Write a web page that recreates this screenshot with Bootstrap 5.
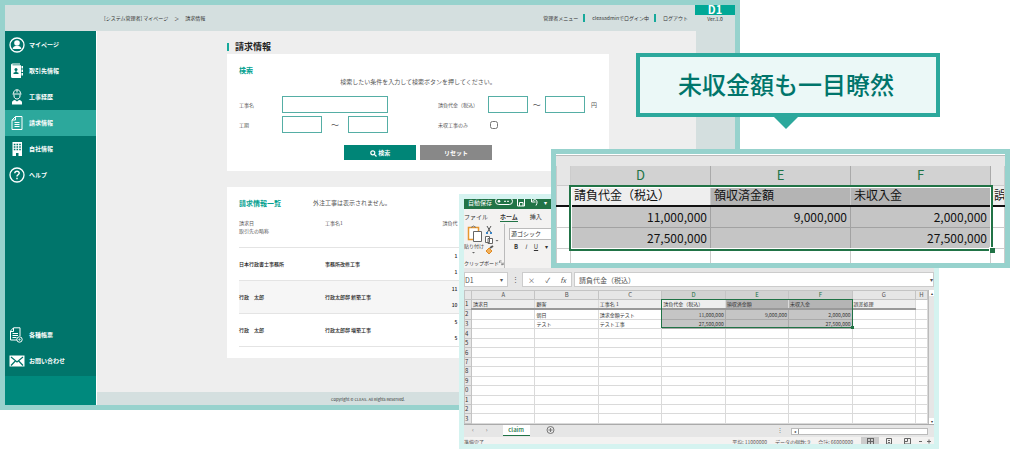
<!DOCTYPE html>
<html lang="ja">
<head>
<meta charset="utf-8">
<meta name="viewport" content="width=device-width, initial-scale=1">
<title>請求情報</title>
<link href="https://cdn.jsdelivr.net/npm/bootstrap@5.3.0/dist/css/bootstrap.min.css" rel="stylesheet">
<style>
:root{--jp:"Noto Sans CJK JP","Noto Sans",sans-serif;--mint:#97d2cd;--deep:#00756b;--teal:#2ca89c;--haze:#d4dfdf}
body{font-family:var(--jp);font-size:5px;line-height:8px;color:#333;background:#fff}
.stage{min-height:450px}
/* application window */
.app-window{margin-right:270px;border:5px solid var(--mint);min-height:410px;background:#eee}
.top-bar{height:26px;background:var(--haze);padding-left:99px}
.top-bar a{color:#333;text-decoration:none}
.top-bar .links{padding-right:2px}
.top-bar .links a{padding:0 5px 0 7px;border-left:2px solid #16a99b}
.top-bar .links a:first-child{border:0}
.crumbs{display:flex;gap:6px}
.version{width:40px;font-size:5px}
.version b{display:block;height:10px;background:#00a896;color:#fff;font-size:11px;line-height:8px;overflow:hidden}
.side-menu{width:92px;background:var(--deep);border-right:1px solid #fff;padding-top:1px}
.side-menu a{height:26px;gap:4px;padding-left:4px;color:#fff;font-size:6px;font-weight:700;text-decoration:none}
.side-menu a.current{background:var(--teal)}
.side-menu svg{width:16px;height:16px;flex:none}
.side-foot{height:29px;margin-top:2px;background:#00897d}
.right-rail{width:39px;background:var(--haze)}
.page-area{min-width:0;padding:8px 87px 0 130px}
.page-title{font-size:9px;line-height:15px;font-weight:700;margin:0;color:#222}
.page-title::before{content:"";width:2px;height:8px;background:#16a99b;margin-right:6px}
.panel{background:#fff;padding:10px 12px 11px}
.panel h2{font-size:7px;line-height:12px;font-weight:700;color:#00a08f;margin:0}
.note{font-size:6px;line-height:12px;color:#555;margin:0}
.search-grid{display:grid;grid-template-columns:199px minmax(0,1fr);row-gap:3px;margin-top:8px;color:#555}
.search-grid>div{height:17px;white-space:nowrap}
.search-grid label{width:43px}
.search-grid label.wide{width:51px}
.search-grid input[type=text]{height:17px;width:40px;min-width:0;flex:none;border:1px solid #55aea5;border-radius:0;padding:0 2px;font-size:6px;background:#fff}
.search-grid input.full{width:106px}
.search-grid input[type=checkbox]{width:8px;height:8px;margin:0 0 0 1px}
.search-grid .tilde{width:26px;text-align:center;font-size:8px}
.search-grid .tilde.slim{width:17px}
.search-grid .yen{font-size:6px;padding-left:6px}
.act{width:72px;height:15px;border:0;border-radius:0;color:#fff;font-size:6px;line-height:15px;font-weight:700;padding:0;background:#008577}
.act.grey{background:#888}
.claims{width:100%;table-layout:fixed;margin-top:10px}
.claims th{font-weight:400;color:#555;padding:0 0 12px;vertical-align:top;white-space:nowrap}
.claims td{height:33px;padding:0;font-weight:500;color:#222}
.claims tr{border-bottom:1px solid #e4e4e4}
.claims tr.alt{background:#f6f6f6}
.claims .amt{text-align:right;line-height:16px}
.app-foot{height:13px;background:var(--haze);font-size:4px;line-height:15px;text-align:center;padding-right:96px}
/* spreadsheet window */
.sheet-window{position:absolute;top:194px;left:459px;right:71px;border:5px solid #d5f3f0;background:#f3f2f1;overflow:hidden}
.sheet-title{height:10px;background:#217346;color:#fff;font-size:6px;line-height:8px;gap:3px;padding-left:4px;overflow:hidden}
.sheet-title svg{height:10px}
.tabs-row{height:15px;font-size:6px;gap:12px}
.tabs-row .on{font-weight:700;border-bottom:1px solid #217346;line-height:9px}
.ribbon{height:44px}
.ribbon .clip{width:41px;border-right:1px solid #bbb;white-space:nowrap}
.ribbon .clip svg{width:40px;height:31px;display:block}
.font-name{width:50px;height:12px;border:1px solid #bbb;background:#fff;font-size:6px;line-height:10px;padding-left:1px}
.marks{font-size:6px;gap:7px;padding:3px 0 0 5px}
.formula-row{height:22px;background:#e6e6e6;gap:2px;color:#555;font-size:7px;line-height:14px}
.formula-row>div{background:#fff;border:1px solid #ccc;height:15px}
.formula-row .cell-ref{width:44px}
.formula-row .entry-keys{width:50px}
.formula-row .dots{border:0;background:none;width:10px;text-align:center}
.cells{width:100%;height:134px;table-layout:fixed;background:#fff;border-collapse:collapse}
.cells th,.cells td{border:1px solid #dadada;padding:0 1px;line-height:8px;font-weight:400;white-space:nowrap;color:#333}
.cells thead th{background:#e6e6e6;text-align:center;border-color:#c4c4c4;color:#555;font-size:6px}
.cells tbody th{background:#e6e6e6;padding:0;border-color:#c4c4c4;font-size:6px}
.cells .titles td{background:#eee}
.cells .titles td:not(:last-child){border-bottom:2px solid #999}
.cells .titles td:last-child{background:#fff}
.cells .num,.big-cells .num{text-align:right}
.cells thead .pick{background:#d2d2d2;color:#217346}
.cells td.pick,.big-cells td.pick{background:#c5c5c5;border-color:#aaa}
.cells .titles td.dark,.big-cells .titles td.dark{background:#b4b4b4}
.anchor-cell{position:relative}
.range{position:absolute;left:-1px;top:-1px;width:calc(300% + 4px);height:calc(300% + 4px);border:1px solid #217346;pointer-events:none;z-index:1}
.range::after{content:"";position:absolute;right:-2px;bottom:-2px;width:3px;height:3px;background:#217346}
.v-scroll{width:6px;background:#e6e6e6;border-left:1px solid #bbb}
.v-scroll span{background:#fff;font-size:4px;line-height:6px;text-align:center}
.sheet-tabs{height:13px;background:#e6e6e6;border-top:1px solid #aaa;color:#777;font-size:6px;line-height:10px}
.sheet-tabs .tab-on{width:27px;height:11px;margin-left:15px;background:#fff;border-bottom:1px solid #217346;color:#217346;text-align:center;font-weight:500}
.h-scroll{width:137px;height:7px;margin:3px 6px 0 4px;border:1px solid #bbb;background:#fff;line-height:5px}
.h-scroll span{width:7px;border-right:1px solid #999;text-align:center;color:#333;font-size:4px}
.status-row{height:7px;color:#555;line-height:9px;overflow:hidden;padding-right:1px}
.status-row svg{width:72px;height:7px}
/* enlarged range */
.zoom-window{position:absolute;top:149px;left:551px;right:0;height:119px;border:5px solid var(--mint);background:#e6e6e6;overflow:hidden}
.zoom-window .edge{height:12px;border-top:1px solid #fff;box-shadow:inset 0 1px #bbb}
.big-cells{width:100%;table-layout:fixed;border-collapse:collapse;background:#fff;font-size:12px;line-height:18px}
.big-cells th,.big-cells td{border:1px solid #ccc;padding:0 3px;height:21px;white-space:nowrap;overflow:hidden;color:#111;font-weight:400}
.big-cells thead th{height:19px;background:#e6e6e6;border-top:0;text-align:center;font-size:13px;color:#217346}
.big-cells thead .pick{background:#d2d2d2;border-color:#aaa}
.big-cells .titles td{background:#eee;border-bottom:2px solid #111;padding-right:0}
.big-cells td.pick{border-color:#a2a2a2}
.big-cells td.anchor-cell{overflow:visible}
.big-cells .range{left:-2px;width:calc(300% + 7px);height:calc(300% + 8px);border-width:2px;box-shadow:inset 0 0 0 1px #fff}
.big-cells .range::after{right:-4px;bottom:-4px;width:6px;height:6px;border:solid #fff;border-width:1px 0 0 1px}
/* callout */
.callout{position:absolute;top:53px;left:636px;right:70px;height:64px;padding-right:4px;border:4px solid var(--teal);background:#ebf8f7;color:var(--deep);font-size:24px;font-weight:500;line-height:54px;text-align:center}
.callout::after{content:"";position:absolute;top:100%;left:50%;margin:3px 0 0 -15px;border:13px solid transparent;border-top-color:var(--teal);border-bottom:0}
</style>
</head>
<body>
<div class="stage position-relative overflow-hidden">

<section class="app-window d-flex flex-column">
  <header class="top-bar d-flex justify-content-between">
    <nav class="crumbs align-self-center"><span>[システム管理者] <a href="#">マイページ</a></span><span>＞</span><span>請求情報</span></nav>
    <div class="d-flex">
      <nav class="links d-flex align-self-center"><a href="#">管理者メニュー</a><a href="#">cleasadminでログイン中</a><a href="#">ログアウト</a></nav>
      <div class="version text-center"><b>D1</b>Ver.1.0</div>
    </div>
  </header>
  <div class="d-flex flex-grow-1">
    <aside class="side-menu d-flex flex-column flex-shrink-0">
      <a class="d-flex align-items-center" href="#"><svg viewBox="0 0 16 16" fill="#fff"><circle cx="8" cy="8" r="7" fill="none" stroke="#fff" stroke-width="1.3"/><circle cx="8" cy="6" r="2.8"/><path d="M3.600 12c.3-2 1.700-2.600 3-2.900h2.800c1.300.3 2.700.9 3 2.900z"/></svg>マイページ</a>
      <a class="d-flex align-items-center" href="#"><svg viewBox="0 0 16 16" fill="#fff"><path d="M2 2q0-1.500 1.500-1.500H11v1H3.500v.700H12V15H3.500Q2 15 2 13.500z"/><path d="M12.500 3h1.500v2.500h-1.500zm0 3.500H14V9h-1.500zm0 3.500H14v2.500h-1.500z"/><g fill="#00756b"><circle cx="7" cy="6.500" r="1.500"/><path d="M6.400 7.500h1.200v1.500l1.900.700V11h-5V9.700l1.900-.700z"/></g></svg>取引先情報</a>
      <a class="d-flex align-items-center" href="#"><svg viewBox="0 0 16 16" fill="none" stroke="#fff"><path d="M4.500 4.500C4.500-.5 11.500-.5 11.500 4.500M3.500 5h9M5 5.500v1.500c0 4 6 4 6 0V5.500M8 1v2.500"/><path d="M3 15.500v-2q0-2 3-2.500l2 1.500 2-1.500q3 .5 3 2.500v2z" fill="#fff" stroke="none"/></svg>工事経歴</a>
      <a class="d-flex align-items-center current" href="#"><svg viewBox="0 0 16 16" fill="none" stroke="#fff"><path d="M6.500 1.500H13v13H3V5zM6.500 1.500V5H3M5.500 7.500h5M5.500 9.500h5M5.500 11.500h5"/></svg>請求情報</a>
      <a class="d-flex align-items-center" href="#"><svg viewBox="0 0 16 16" fill="#fff"><path d="M3.500 1h9.500v14H9.500v-3H7v3H3.500z"/><path d="M4.800 3.500h7M4.800 6h7M4.800 8.500h7" stroke="#00756b" stroke-width="1.300" stroke-dasharray="1.600 1.100"/></svg>自社情報</a>
      <a class="d-flex align-items-center" href="#"><svg viewBox="0 0 16 16" fill="none" stroke="#fff" stroke-width="1.300"><circle cx="8" cy="8" r="7"/><path d="M5.800 6.300c0-3 4.600-2.700 4.400 0C10.100 7.800 8 7.800 8 9.500M8 10.800v1.500" stroke-width="1.500"/></svg>ヘルプ</a>
      <a class="d-flex align-items-center mt-auto" href="#"><svg viewBox="0 0 16 16" fill="none" stroke="#fff"><path d="M8 13H1.500V4L4.500.800H11V9M4.500 1v3.500h-3M3.500 6.500h5.500M3.500 8.500h5.500M3.500 10.500h4"/><circle cx="10.500" cy="12.500" r="2.700"/><circle cx="10.500" cy="12.500" r=".6"/></svg>各種帳票</a>
      <a class="d-flex align-items-center" href="#"><svg viewBox="0 0 16 16"><path fill="#fff" d="M.5 2.500h15v11H.5z"/><path d="M2 4l6 5 6-5M2 12.500l4.300-4.500M14 12.500L9.700 8" fill="none" stroke="#00756b" stroke-width="1.200"/></svg>お問い合わせ</a>
      <div class="side-foot"></div>
    </aside>
    <div class="flex-grow-1 d-flex flex-column">
      <div class="d-flex flex-grow-1">
        <main class="page-area flex-grow-1">
          <h1 class="page-title d-flex align-items-center">請求情報</h1>
          <form class="panel">
            <h2>検索</h2>
            <p class="note text-center">検索したい条件を入力して検索ボタンを押してください。</p>
            <div class="search-grid">
              <div class="d-flex align-items-center"><label for="work">工事名</label><input type="text" id="work" class="full"></div>
              <div class="d-flex align-items-center"><label class="wide" for="p1">請負代金（税込）</label><input type="text" id="p1"><span class="tilde slim">～</span><input type="text" id="p2" aria-label="請負代金の上限"><span class="yen">円</span></div>
              <div class="d-flex align-items-center"><label for="t1">工期</label><input type="text" id="t1"><span class="tilde">～</span><input type="text" id="t2" aria-label="工期の終わり"></div>
              <div class="d-flex align-items-center"><label class="wide" for="unpaid">未収工事のみ</label><input type="checkbox" id="unpaid"></div>
            </div>
            <div class="d-flex justify-content-center gap-1 mt-2 pt-1">
              <button type="button" class="act"><svg width="7" height="7" viewBox="0 0 7 7" fill="none" stroke="#fff" stroke-width="1.200"><circle cx="2.800" cy="2.800" r="2"/><path d="M4.300 4.300l2.200 2.200"/></svg> 検索</button>
              <button type="reset" class="act grey">リセット</button>
            </div>
          </form>
          <section class="panel mt-3">
            <div class="d-flex"><h2>請求情報一覧</h2><p class="note ms-4 ps-2">外注工事は表示されません。</p></div>
            <table class="claims">
              <colgroup><col style="width:24%"><col style="width:24%"><col style="width:13%"><col></colgroup>
              <thead><tr><th>請求日<br>取引先の略称</th><th>工事名1</th><th class="text-end">請負代</th><th></th></tr></thead>
              <tbody>
                <tr><td>日本行政書士事務所</td><td>事務所改修工事</td><td class="amt">1<br>1</td><td></td></tr>
                <tr class="alt"><td>行政　太郎</td><td>行政太郎邸 新築工事</td><td class="amt">11<br>10</td><td></td></tr>
                <tr><td>行政　太郎</td><td>行政太郎邸 増築工事</td><td class="amt">5<br>5</td><td></td></tr>
              </tbody>
            </table>
          </section>
        </main>
        <div class="right-rail flex-shrink-0"></div>
      </div>
      <footer class="app-foot">Copyright © CLEAS. All Rights Reserved.</footer>
    </div>
  </div>
</section>

<section class="sheet-window">
  <div class="sheet-title d-flex">自動保存
    <svg width="46" viewBox="0 0 46 10" fill="none" stroke="#fff"><rect x=".5" y="-1" width="17" height="6.500" rx="3.200"/><circle cx="4" cy="2.300" r="1.300" fill="#fff" stroke="none"/><path d="M9 2.300h5" stroke-dasharray="2 1"/><path d="M22.500-1v8h7V-1M24.500 7V3.500h3.500V7M36.500-1v4h4M37 2.500c3-4 7-1 4 4"/></svg>
    <span>▾</span>
  </div>
  <div class="tabs-row d-flex align-items-center"><span>ファイル</span><span class="on">ホーム</span><span>挿入</span><span>ペ</span></div>
  <div class="ribbon d-flex">
    <div class="clip">
      <svg viewBox="0 0 40 31" fill="none" stroke="#666"><rect x="4.500" y="3.500" width="10" height="12" fill="#fff" stroke="#e8962e" stroke-width="1.500"/><path d="M7 3.500q2.500-3 5 0" stroke="#777"/><path fill="#fff" d="M9.500 7.500h8v10h-8z"/><path d="M23 2l3.500 6M27 2l-3.500 6" stroke="#555"/><path d="M22 9h2M26 9h2" stroke="#3b84c4" stroke-width="2"/><path fill="#fff" d="M21.500 12.500h4v6h-4zM24 14.500h4.500v5H24z"/><path d="M31.500 16h3l-1.500 1.500z" fill="#666" stroke="none"/><path d="M22 27l3-3 3 3-3 3z" fill="#f3b15c" stroke="#df8a24"/><path d="M26 24l3-2" stroke="#555" stroke-width="2"/><text x="0" y="24" font-size="5" fill="#444" stroke="none">貼り付け</text><path d="M8 28h3l-1.500 1.500z" fill="#666" stroke="none"/></svg>
      <div class="d-flex justify-content-between align-items-center pt-1"><span>クリップボード</span><svg viewBox="0 0 6 6" style="width:6px;height:6px" fill="none" stroke="#777"><path d="M.5 3V.5H3M2 2l3 3M5 2.500V5H2.500"/></svg></div>
    </div>
    <div class="ps-1"><div class="font-name mt-1">源ゴシック</div><div class="marks d-flex"><b>B</b><i>I</i><u>U</u><span>▾</span></div></div>
  </div>
  <div class="formula-row d-flex align-items-center"><div class="cell-ref d-flex justify-content-between pe-1"><span>D1</span><small>▾</small></div><div class="dots">⋮</div><div class="entry-keys d-flex justify-content-around"><span>×</span><span>✓</span><i>fx</i></div><div class="flex-grow-1 d-flex justify-content-between ps-1"><span>請負代金（税込）</span><small>▾</small></div></div>
  <div class="d-flex">
    <table class="cells">
      <colgroup><col style="width:7px"><col><col><col><col><col><col><col><col style="width:12px"></colgroup>
      <thead><tr><th></th><th>A</th><th>B</th><th>C</th><th class="pick">D</th><th class="pick">E</th><th class="pick">F</th><th>G</th><th>H</th></tr></thead>
      <tbody id="rows">
        <tr class="titles"><th>1</th><td>請求日</td><td>顧客</td><td>工事名 1</td><td class="anchor-cell">請負代金（税込）<span class="range"></span></td><td class="dark">領収済金額</td><td class="dark">未収入金</td><td>誤差処理</td><td></td></tr>
        <tr><th>2</th><td></td><td>朝日</td><td>請求金額テスト</td><td class="num pick">11,000,000</td><td class="num pick">9,000,000</td><td class="num pick">2,000,000</td><td></td><td></td></tr>
        <tr><th>3</th><td></td><td>テスト</td><td>テスト工事</td><td class="num pick">27,500,000</td><td class="pick"></td><td class="num pick">27,500,000</td><td></td><td></td></tr>
      </tbody>
    </table>
    <div class="v-scroll d-flex flex-column justify-content-between flex-shrink-0"><span>▴</span><span>▾</span></div>
  </div>
  <div class="sheet-tabs d-flex align-items-start"><span class="ps-2">‹</span><span class="ps-2 ms-1">›</span><div class="tab-on">claim</div><svg class="ms-3" width="9" height="9" viewBox="0 0 9 9" fill="none" stroke="#777"><circle cx="4.500" cy="5" r="3.500"/><path d="M4.500 3v4M2.500 5h4"/></svg><span class="ms-auto pe-1">⋮</span><div class="h-scroll d-flex"><span>◂</span></div></div>
  <div class="status-row d-flex"><span>準備完了</span><span class="ms-auto">平均: 11000000</span><span class="ms-2">データの個数: 9</span><span class="ms-2">合計: 66000000</span><svg class="ms-2" viewBox="0 0 72 7" fill="none" stroke="#666"><path d="M0 0h18v7H0z" fill="#ccc" stroke="none"/><path d="M6 1.500h6M6 4.500h6M6.500 1v6M9.500 1v6M12.500 1v6M25.500 1.500h5V7h-5zM27 3.500h2M27 5.500h2M43.500 1.500h6V7h-6zM46.500 1.500v3h-3M58 4.500h3M66 4.500h4M68 2.500v4"/></svg></div>
</section>

<section class="zoom-window">
  <div class="edge"></div>
  <table class="big-cells">
    <colgroup><col style="width:14px"><col><col><col><col style="width:14px"></colgroup>
    <thead><tr><th></th><th class="pick">D</th><th class="pick">E</th><th class="pick">F</th><th></th></tr></thead>
    <tbody>
      <tr class="titles"><td></td><td class="anchor-cell">請負代金（税込）<span class="range"></span></td><td class="dark">領収済金額</td><td class="dark">未収入金</td><td>誤</td></tr>
      <tr><td></td><td class="num pick">11,000,000</td><td class="num pick">9,000,000</td><td class="num pick">2,000,000</td><td></td></tr>
      <tr><td></td><td class="num pick">27,500,000</td><td class="pick"></td><td class="num pick">27,500,000</td><td></td></tr>
      <tr><td></td><td></td><td></td><td></td><td></td></tr>
    </tbody>
  </table>
</section>

<div class="callout">未収金額も一目瞭然</div>
</div>
<script>
// fill the sheet with its empty rows; the narrow header shows the last digit only
const body = document.getElementById('rows');
for (let n = 4; n <= 13; n++) {
  body.insertAdjacentHTML('beforeend', `<tr><th>${n % 10}</th>${'<td></td>'.repeat(8)}</tr>`);
}
</script>
<script src="https://cdn.jsdelivr.net/npm/bootstrap@5.3.0/dist/js/bootstrap.bundle.min.js"></script>
</body>
</html>
